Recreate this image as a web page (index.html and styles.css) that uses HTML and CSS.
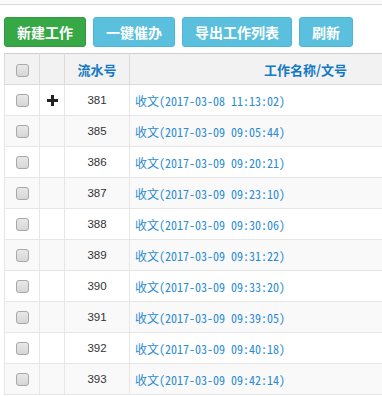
FILE: index.html
```html
<!DOCTYPE html>
<html lang="zh-CN">
<head>
    <meta charset="UTF-8">
    <title>工作列表</title>
    <link rel="stylesheet" href="styles.css">
</head>
<body>
    <div class="topbar"></div>

    <!-- Toolbar -->
    <div class="toolbar">
        <button class="btn btn-success">新建工作</button>
        <button class="btn btn-info">一键催办</button>
        <button class="btn btn-info">导出工作列表</button>
        <button class="btn btn-info">刷新</button>
    </div>

    <!-- Work list -->
    <table class="work-table">
        <colgroup>
            <col class="col-check">
            <col class="col-expand">
            <col class="col-no">
            <col>
        </colgroup>
        <thead>
            <tr>
                <th><span class="cb"></span></th>
                <th></th>
                <th>流水号</th>
                <th>工作名称/文号</th>
            </tr>
        </thead>
        <tbody>
            <tr>
                <td><span class="cb"></span></td>
                <td>
                    <svg class="plus" viewBox="0 0 11 11"><path d="M4 0h3v4h4v3H7v4H4V7H0V4h4z"/></svg>
                </td>
                <td class="num">381</td>
                <td class="name"><a href="#">收文<span class="date">(2017-03-08 11:13:02)</span></a></td>
            </tr>
            <tr>
                <td><span class="cb"></span></td>
                <td></td>
                <td class="num">385</td>
                <td class="name"><a href="#">收文<span class="date">(2017-03-09 09:05:44)</span></a></td>
            </tr>
            <tr>
                <td><span class="cb"></span></td>
                <td></td>
                <td class="num">386</td>
                <td class="name"><a href="#">收文<span class="date">(2017-03-09 09:20:21)</span></a></td>
            </tr>
            <tr>
                <td><span class="cb"></span></td>
                <td></td>
                <td class="num">387</td>
                <td class="name"><a href="#">收文<span class="date">(2017-03-09 09:23:10)</span></a></td>
            </tr>
            <tr>
                <td><span class="cb"></span></td>
                <td></td>
                <td class="num">388</td>
                <td class="name"><a href="#">收文<span class="date">(2017-03-09 09:30:06)</span></a></td>
            </tr>
            <tr>
                <td><span class="cb"></span></td>
                <td></td>
                <td class="num">389</td>
                <td class="name"><a href="#">收文<span class="date">(2017-03-09 09:31:22)</span></a></td>
            </tr>
            <tr>
                <td><span class="cb"></span></td>
                <td></td>
                <td class="num">390</td>
                <td class="name"><a href="#">收文<span class="date">(2017-03-09 09:33:20)</span></a></td>
            </tr>
            <tr>
                <td><span class="cb"></span></td>
                <td></td>
                <td class="num">391</td>
                <td class="name"><a href="#">收文<span class="date">(2017-03-09 09:39:05)</span></a></td>
            </tr>
            <tr>
                <td><span class="cb"></span></td>
                <td></td>
                <td class="num">392</td>
                <td class="name"><a href="#">收文<span class="date">(2017-03-09 09:40:18)</span></a></td>
            </tr>
            <tr>
                <td><span class="cb"></span></td>
                <td></td>
                <td class="num">393</td>
                <td class="name"><a href="#">收文<span class="date">(2017-03-09 09:42:14)</span></a></td>
            </tr>
        </tbody>
    </table>
</body>
</html>
```

FILE: styles.css
```css
* {
    margin: 0;
    padding: 0;
    box-sizing: border-box;
}

html, body {
    overflow: hidden;
}

body {
    background: #fff;
    font-family: "Liberation Sans", "Noto Sans CJK SC", sans-serif;
    font-size: 12px;
    color: #333;
}

.topbar {
    height: 5px;
    background: #fafafa;
    border-bottom: 1px solid #d9d9d9;
}

.toolbar {
    display: flex;
    gap: 7px;
    margin-top: 12px;
    padding-left: 4px;
}

.btn {
    height: 30px;
    padding: 0 12px;
    border: 1px solid transparent;
    border-radius: 3px;
    color: #fff;
    font-family: "Noto Sans CJK SC", sans-serif;
    font-size: 14px;
    font-weight: bold;
    cursor: pointer;
}

.btn-success {
    background: #36a846;
    border-color: #2f9b3e;
}

.btn-info {
    background: #5bc0de;
    border-color: #4bb6d8;
}

/* Table */
.work-table {
    margin: 6px 0 0 4px;
    width: 478px;
    table-layout: fixed;
    border-collapse: collapse;
    border-top: 1px solid #cfcfcf;
    border-left: 1px solid #d6d6d6;
}

.col-check { width: 35px; }
.col-expand { width: 25px; }
.col-no { width: 65px; }

.work-table th,
.work-table td {
    height: 31px;
    border: 1px solid #e6e6e6;
    border-top: none;
    text-align: center;
    vertical-align: middle;
}

.work-table th {
    height: 31px;
    background: #f2f2f2;
    border-color: #dadada;
    color: #1479c4;
    font-family: "Noto Sans CJK SC", sans-serif;
    font-size: 13px;
    font-weight: bold;
}

.work-table tbody tr:nth-child(even) td {
    background: #f9f9f9;
}

.cb {
    display: inline-block;
    width: 13px;
    height: 13px;
    border: 1px solid #a8a8a8;
    border-radius: 3px;
    background: linear-gradient(#e8e8e8, #d6d6d6);
    vertical-align: middle;
}

.plus {
    width: 11px;
    height: 11px;
    fill: #222;
    vertical-align: middle;
}

.num {
    font-size: 11.5px;
    color: #333;
}

.work-table td.name {
    text-align: left;
    padding-left: 5px;
}

.name a {
    color: #2a8bd4;
    text-decoration: none;
    font-family: "Noto Sans CJK SC", sans-serif;
    font-size: 12px;
    white-space: nowrap;
}

.date {
    font-family: "Noto Sans Mono CJK SC", "Liberation Mono", monospace;
    font-size: 12px;
}
```
